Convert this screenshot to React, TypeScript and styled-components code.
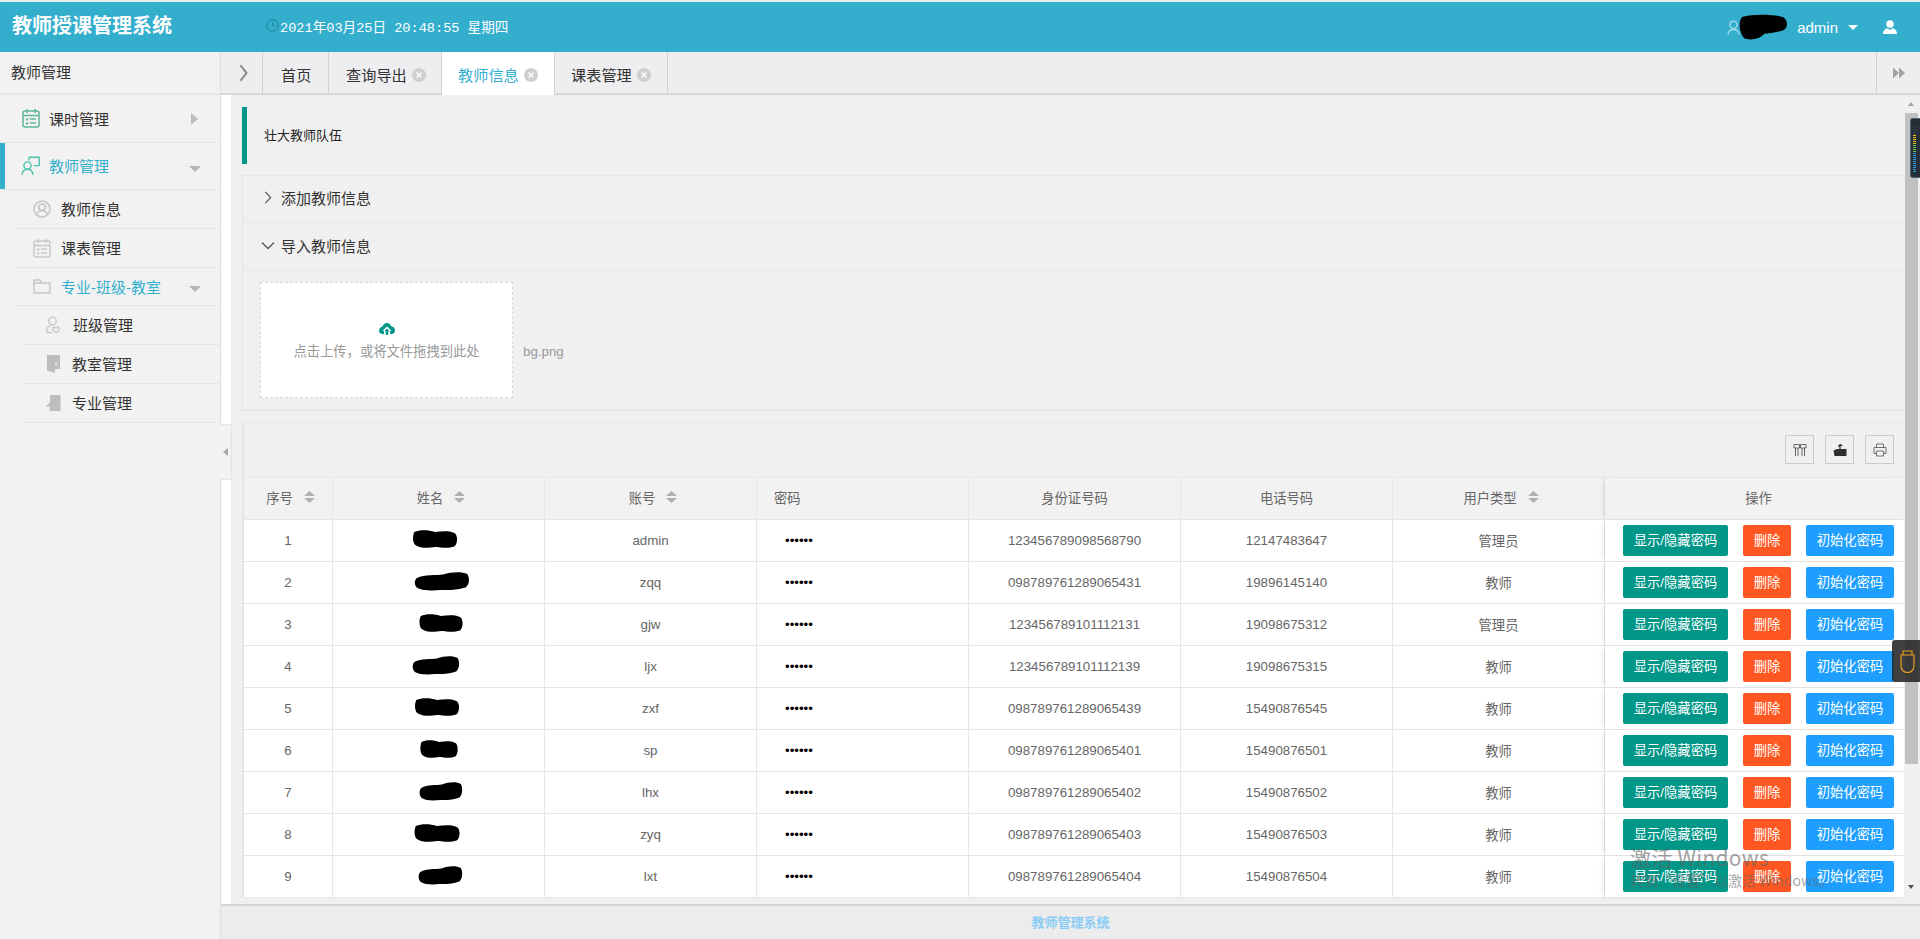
import React from "react";
import styled, { createGlobalStyle } from "styled-components";

const FONT = `"Liberation Sans", "Noto Sans CJK SC", sans-serif`;
const BLUE = "#33aecd";
const LINE = "#e6e6e6";

const Global = createGlobalStyle`
  html, body { margin: 0; padding: 0; height: 100%; overflow: hidden; background: #f2f2f2; }
  #root { height: 100%; }
  * { box-sizing: border-box; }
`;

const Page = styled.div`
  position: relative; width: 1920px; height: 939px; overflow: hidden;
  display: flex; flex-direction: column; font-family: ${FONT}; color: #333; border-top: 2px solid #e9eef0;
`;

/* ---------- header ---------- */
const Header = styled.header`
  flex: 0 0 50px; background: ${BLUE}; display: flex; align-items: center; color: #fff;
`;
const Logo = styled.h1`
  margin: 0; padding: 0 0 2px 12px; width: 266px; font-size: 20px; font-weight: 700; line-height: 48px;
`;
const Clock = styled.div`
  display: flex; align-items: center; font-family: "Liberation Mono", "Noto Sans CJK SC", monospace; font-size: 13.6px;
  gap: 1px; padding-bottom: 3px; svg { display: block; }
`;
const HeaderRight = styled.div`
  margin-left: auto; display: flex; align-items: center; padding-right: 23px; font-size: 15px;
`;
const AdminName = styled.span` margin-left: 10px; `;
const Caret = styled.span`
  margin: 1px 25px 0 10px; width: 0; height: 0;
  border-left: 5px solid transparent; border-right: 5px solid transparent; border-top: 5px solid #fff;
`;

/* ---------- body ---------- */
const Body = styled.div` flex: 1; display: flex; min-height: 0; `;

const Sidebar = styled.aside`
  position: relative; flex: 0 0 221px; background: #f2f2f2; border-right: 1px solid #dedede;
`;
const SideTitle = styled.div`
  height: 43px; line-height: 41px; padding-left: 11px; font-size: 15px; border-bottom: 2px solid ${LINE};
`;
const SideRow = styled.div<{ $active?: boolean; $h: number; $indent: number; $line: number; $blue?: boolean; $gap: number }>`
  position: relative; height: ${(p) => p.$h}px; display: flex; align-items: center;
  padding: 0 0 2px ${(p) => p.$indent}px; gap: ${(p) => p.$gap}px; font-size: 15px;
  color: ${(p) => (p.$blue ? BLUE : "#333")};
  &::after {
    content: ""; position: absolute; left: ${(p) => p.$line}px; right: 0; bottom: 0; height: 1px; background: ${LINE};
  }
  ${(p) => p.$active && `&::before { content: ""; position: absolute; left: 0; top: 0; bottom: 0; width: 5px; background: ${BLUE}; }`}
`;
const SideArrowRight = styled.span`
  position: absolute; left: 191px; top: 50%; margin-top: -6px; width: 0; height: 0;
  border-top: 6px solid transparent; border-bottom: 6px solid transparent; border-left: 7px solid #bdbdbd;
`;
const SideArrowDown = styled.span`
  position: absolute; left: 189px; top: 50%; margin-top: -1px; width: 0; height: 0;
  border-left: 6px solid transparent; border-right: 6px solid transparent; border-top: 6px solid #b5b5b5;
`;
const Handle = styled.div`
  position: absolute; left: 100%; top: 372px; width: 12px; height: 56px; background: #f2f2f2; z-index: 2;
  border: 1px solid #e4e4e4; border-left: 0; border-radius: 0 3px 3px 0; display: flex; align-items: center; justify-content: center;
  &::after {
    content: ""; width: 0; height: 0; border-top: 4px solid transparent; border-bottom: 4px solid transparent; border-right: 5px solid #a8a8a8;
  }
`;

const Right = styled.div` flex: 1; min-width: 0; display: flex; flex-direction: column; `;

/* ---------- tabs ---------- */
const TabBar = styled.nav`
  flex: 0 0 43px; display: flex; background: #eeeef0; border-bottom: 2px solid #d8d8d8;
`;
const TabSide = styled.div<{ $w: number; $end?: boolean }>`
  flex: 0 0 ${(p) => p.$w}px; display: flex; align-items: center; justify-content: center;
  ${(p) => (p.$end ? "margin-left: auto; border-left: 1px solid #d2d2d2;" : "border-right: 1px solid #d2d2d2; padding-left: 4px;")}
`;
const Tab = styled.div<{ $active?: boolean; $w: number; $pad: number }>`
  width: ${(p) => p.$w}px; height: 43px; margin-bottom: -2px; padding-left: ${(p) => p.$pad}px; display: flex; align-items: center; gap: 5px;
  font-size: 15.2px; border-right: 1px solid #d2d2d2;
  background: ${(p) => (p.$active ? "#fff" : "transparent")}; color: ${(p) => (p.$active ? BLUE : "#333")};
  svg { margin-top: 2px; }
`;

/* ---------- main ---------- */
const MainWrap = styled.div`
  flex: 1; min-height: 0; display: flex; padding-left: 10px; background: #fff; border-bottom: 2px solid #d5d5d5;
`;
const Content = styled.main`
  flex: 1; min-width: 0; overflow: hidden; background: #f0f0f0; padding: 12px 2px 0 11px;
`;
const Quote = styled.div`
  height: 57px; border-left: 5px solid #009688; padding: 0 0 2px 17px; display: flex; align-items: center;
  font-size: 13px; color: #222; margin-bottom: 11px;
`;
const Collapse = styled.section`
  border: 1px solid ${LINE}; border-right: 0; border-bottom: 2px solid #e6e6e6; margin-bottom: 11px;
`;
const CollapseTitle = styled.div<{ $bordered?: boolean }>`
  height: 47px; display: flex; align-items: center; padding: 0 0 3px 17px; gap: 6px; font-size: 15px; color: #333;
  ${(p) => p.$bordered && `border-bottom: 1px solid ${LINE};`}
`;
const ChevSlot = styled.span` width: 15px; display: flex; justify-content: center; `;
const CollapseBody = styled.div`
  height: 139px; padding: 0 17px; display: flex; align-items: center; gap: 10px; border-top: 1px solid ${LINE}; 
`;
const Drop = styled.div`
  width: 253px; height: 116px; background: #fff; border: 1px dashed #d9d9d9; display: flex; flex-direction: column;
  align-items: center; justify-content: center; gap: 6px; font-size: 13.3px; color: #999; padding-top: 3px;
`;
const FileName = styled.span` font-size: 13.3px; color: #999; margin-top: 22px; `;

const TableBox = styled.section` border: 1px solid ${LINE}; border-right: 0; border-bottom: 0; border-left-width: 2px; `;
const Toolbar = styled.div`
  height: 55px; display: flex; align-items: center; justify-content: flex-end; gap: 11px; padding: 0 9px 1px 0; border-bottom: 1px solid ${LINE};
`;
const ToolBtn = styled.div`
  width: 29px; height: 29px; border: 1px solid #ccc; display: flex; align-items: center; justify-content: center;
`;
const Table = styled.table`
  width: 1660px; border-collapse: separate; border-spacing: 0; table-layout: fixed; font-size: 13.3px; color: #666;
`;
const Th = styled.th<{ $left?: boolean; $fixed?: boolean; $sort?: boolean }>`
  height: 42px; padding: 0 0 3px; font-weight: 400; background: #f2f2f2; color: #666;
  border-right: ${(p) => (p.$fixed ? 0 : `1px solid ${LINE}`)}; border-bottom: 1px solid ${LINE};
  text-align: ${(p) => (p.$left ? "left" : "center")};
  padding-left: ${(p) => (p.$left ? "17px" : p.$fixed ? "8px" : p.$sort ? "5px" : "0")};
  ${(p) => p.$fixed && "box-shadow: -4px 0 6px -3px rgba(0,0,0,.12);"}
`;
const SortWrap = styled.span` display: inline-flex; align-items: center; gap: 11px; `;
const Td = styled.td<{ $pw?: boolean; $fixed?: boolean }>`
  height: 42px; padding: 0 0 1px; background: #fff; text-align: ${(p) => (p.$pw ? "left" : "center")};
  border-right: ${(p) => (p.$fixed ? 0 : `1px solid ${LINE}`)}; border-bottom: 1px solid ${LINE};
  ${(p) => p.$pw && "padding-left: 28px; color: #000;"}
  ${(p) => p.$fixed && "box-shadow: -4px 0 6px -3px rgba(0,0,0,.12);"}
`;
const Actions = styled.div` display: flex; align-items: center; gap: 15px; padding-left: 18px; `;
const Btn = styled.button<{ $tone: "teal" | "red" | "blue" }>`
  height: 31px; padding: 0; border: 0; border-radius: 2px; color: #fff; font: 13.3px/31px ${FONT};
  width: ${(p) => ({ teal: 105, red: 48, blue: 88 }[p.$tone])}px;
  background: ${(p) => ({ teal: "#009688", red: "#ff5722", blue: "#1e9fff" }[p.$tone])};
`;
const Blob = styled.svg<{ $dx: number; $w: number }>`
  display: block; width: ${(p) => p.$w}px; height: 20px; margin: -3px auto 0; transform: translateX(${(p) => p.$dx}px); filter: blur(.4px);
`;
const HeaderBlob = styled.svg` display: block; width: 50px; height: 26px; margin-left: -2px; margin-right: -1px; `;

/* ---------- fake scrollbar ---------- */
const Scroll = styled.div`
  flex: 0 0 15px; background: #f0f0f0; display: flex; flex-direction: column; align-items: flex-start;
`;
const ArrowUp = styled.span`
  margin: 7px 0 0 3px; width: 0; height: 0; border-left: 3.5px solid transparent; border-right: 3.5px solid transparent; border-bottom: 4px solid #a3a3a3;
`;
const Thumb = styled.div` margin-top: 7px; width: 13px; height: 651px; background: #c1c1c1; `;
const ArrowDown = styled.span`
  margin: auto 0 15px 3px; width: 0; height: 0; border-left: 3.5px solid transparent; border-right: 3.5px solid transparent; border-top: 4px solid #505050;
`;

const Footer = styled.footer`
  flex: 0 0 33px; background: #ececec; text-align: center; line-height: 33px; font-size: 13px; font-weight: 700; color: #8accf5;
`;

/* ---------- overlays ---------- */
const Meter = styled.svg` position: absolute; left: 1910px; top: 116px; width: 10px; height: 60px; display: block; `;
const UsbDock = styled.div`
  position: absolute; left: 1892px; top: 638px; width: 28px; height: 42px; background: rgba(38,38,38,.88); border-radius: 3px 0 0 3px;
  display: flex; align-items: center; justify-content: center; padding-left: 2px;
`;
const Watermark = styled.div`
  position: absolute; left: 1630px; top: 842px; color: rgba(100,100,100,.6); pointer-events: none; font-family: "Noto Sans CJK SC", "Liberation Sans", sans-serif;
`;
const WaterBig = styled.div` font-size: 21px; line-height: 27px; letter-spacing: .3px; `;
const WaterSmall = styled.div` font-size: 14px; line-height: 20px; margin-top: -1px; `;

/* ---------- icons ---------- */
const CalIcon = ({ c, sw = 1.5 }: { c: string; sw?: number }) => (
  <svg width="18" height="20" viewBox="0 0 18 20" fill="none" stroke={c} strokeWidth={sw}>
    <rect x="1" y="3" width="16" height="16" rx="2" />
    <path d="M1 7.5h16M5 1v4M13 1v4M8 11h6M8 15h6M4 11l1 1 1.3-1.6M4 15l1 1 1.3-1.6" />
  </svg>
);
const ChatUser = () => (
  <svg width="20" height="20" viewBox="0 0 20 20" fill="none" stroke="#4cc0a8" strokeWidth="1.4">
    <path d="M8 1.2h10.2v8.4H13M8 1.2v3.4" />
    <circle cx="6.5" cy="9.5" r="3.6" />
    <path d="M1 18.8c.4-3.6 2.6-5.6 5.5-5.6s5.1 2 5.5 5.6" />
  </svg>
);
const UserCircle = () => (
  <svg width="18" height="18" viewBox="0 0 18 18" fill="none" stroke="#c6c6c6" strokeWidth="1.6">
    <circle cx="9" cy="9" r="8" />
    <circle cx="9" cy="7.2" r="3.2" />
    <path d="M3.6 14.8c.8-2.6 2.8-4 5.4-4s4.6 1.4 5.4 4" />
  </svg>
);
const Folder = () => (
  <svg width="18" height="15" viewBox="0 0 18 15" fill="none" stroke="#c6c6c6" strokeWidth="1.4">
    <path d="M1 1h6l2 3h8v10H1zM1 4h8" />
  </svg>
);
const UserHeart = () => (
  <svg width="16" height="18" viewBox="0 0 16 18" fill="none" stroke="#c6c6c6" strokeWidth="1.3">
    <circle cx="6.5" cy="5" r="3.8" />
    <path d="M5 9.5c-3 1-4.5 2.6-4.5 4.6 0 1.6 1.4 2.6 3.6 2.6h2M9.5 11.6c-.9-1-2.8-.4-2.8 1.1 0 1.5 1.6 2.8 3.4 4 1.8-1.2 3.4-2.5 3.4-4 0-1.5-1.9-2.1-2.8-1.1l-.6.7z" />
  </svg>
);
const Door = () => (
  <svg width="15" height="19" viewBox="0 0 15 19">
    <path d="M1 1h13v14l-5 .2V19L1 16.6z" fill="#bdbdbd" />
    <path d="M10 8v3" stroke="#f2f2f2" strokeWidth="1.4" />
  </svg>
);
const Book = () => (
  <svg width="16" height="16" viewBox="0 0 16 16">
    <path d="M5 0h10.5v16H4.6V11.6H.6L5 7z" fill="#bdbdbd" />
  </svg>
);
const Close = () => (
  <svg width="14" height="14" viewBox="0 0 14 14">
    <circle cx="7" cy="7" r="7" fill="#cfcfcf" />
    <path d="M4.5 4.5l5 5M9.5 4.5l-5 5" stroke="#fff" strokeWidth="1.4" />
  </svg>
);
const ChevR = ({ c = "#555", w = 9, h = 14, sw = 1.3 }: { c?: string; w?: number; h?: number; sw?: number }) => (
  <svg width={w} height={h} viewBox="0 0 9 14" fill="none" stroke={c} strokeWidth={sw} preserveAspectRatio="none">
    <path d="M1.5 1l6 6-6 6" />
  </svg>
);
const ChevD = () => (
  <svg width="14" height="9" viewBox="0 0 14 9" fill="none" stroke="#555" strokeWidth="1.3">
    <path d="M1 1.5l6 6 6-6" />
  </svg>
);
const Sort = () => (
  <svg width="11" height="12" viewBox="0 0 11 12" fill="#b0b0b0">
    <path d="M5.5 0L11 5H0zM0 7h11l-5.500 5z" />
  </svg>
);
const Cloud = () => (
  <svg width="16" height="12" viewBox="0 0 16 12" fill="#009688">
    <path d="M8 0c2.200 0 3.800 1.400 4.200 3.300C14.400 3.600 16 5.200 16 7.500 16 9.700 14.500 11 12.600 11H11V7.800h1.600L8 3.500 3.400 7.800H5V11H3.400C1.500 11 0 9.700 0 7.500 0 5.400 1.500 3.800 3.700 3.400 4.200 1.400 5.800 0 8 0z" />
    <path d="M8 5.500l2.600 2.700H9.200V12H6.800V8.200H5.400z" />
  </svg>
);

const names: [number, number, number][] = [
  [-4, 46, 0], [3, 56, 1], [2.5, 45, 0], [-3, 48, 1], [-2, 46, 0], [0.5, 39, 0], [2, 44, 1], [-1.5, 47, 0], [2, 45, 1],
];
const blobPaths = [
  "M5 6C18 1 36 2 50 6 66 4 84 3 94 9 100 16 99 30 92 35 76 40 62 36 50 36 34 39 16 38 7 32 1 26 1 14 5 6Z",
  "M5 14C20 6 38 9 52 7 68 1 86 1 95 6 100 14 99 28 92 33 76 39 60 38 48 38 32 40 14 39 6 34 0 28 0 20 5 14Z",
];
const rows = [
  ["1", "admin", "123456789098568790", "12147483647", "管理员"],
  ["2", "zqq", "098789761289065431", "19896145140", "教师"],
  ["3", "gjw", "123456789101112131", "19098675312", "管理员"],
  ["4", "ljx", "123456789101112139", "19098675315", "教师"],
  ["5", "zxf", "098789761289065439", "15490876545", "教师"],
  ["6", "sp", "098789761289065401", "15490876501", "教师"],
  ["7", "lhx", "098789761289065402", "15490876502", "教师"],
  ["8", "zyq", "098789761289065403", "15490876503", "教师"],
  ["9", "lxt", "098789761289065404", "15490876504", "教师"],
];
const colWidths = [89, 212, 212, 212, 212, 212, 212, 299];

export default function App() {
  return (
    <Page>
      <Global />
      <Header>
        <Logo>教师授课管理系统</Logo>
        <Clock>
          <svg width="13" height="13" viewBox="0 0 13 13" fill="none" stroke="#1f7f9b" strokeWidth="1">
            <circle cx="6.500" cy="6.500" r="5.800" />
            <path d="M6.500 3v3.800h2.800" />
          </svg>
          2021年03月25日 20:48:55 星期四
        </Clock>
        <HeaderRight>
          <svg width="13" height="15" viewBox="0 0 13 15" fill="none" stroke="#a5dce8" strokeWidth="1.300">
            <circle cx="6.500" cy="4.800" r="3.600" />
            <path d="M1 14.500c.3-3.400 2.500-5 5.500-5s5.200 1.600 5.500 5" />
          </svg>
          <HeaderBlob viewBox="0 0 50 26">
            <path d="M4 3C14 0 34 0 45 3 50 6 50 13 46 16 38 19 30 19 26 20 22 25 12 27 6 24 1 18 0 8 4 3Z" fill="#000" />
          </HeaderBlob>
          <AdminName>admin</AdminName>
          <Caret />
          <svg width="14" height="14" viewBox="0 0 14 14" fill="#fff">
            <circle cx="7" cy="4" r="3.800" />
            <path d="M0 14c0-3.600 2.200-5.400 4.500-5.800L7 10l2.500-1.800C11.800 8.600 14 10.400 14 14z" />
          </svg>
        </HeaderRight>
      </Header>

      <Body>
        <Sidebar>
          <SideTitle>教师管理</SideTitle>
          <SideRow $h={48} $indent={22} $line={0} $gap={9}>
            <CalIcon c="#5db59b" />
            课时管理
            <SideArrowRight />
          </SideRow>
          <SideRow $h={47} $indent={21} $line={0} $gap={8} $active $blue>
            <ChatUser />
            教师管理
            <SideArrowDown />
          </SideRow>
          <SideRow $h={39} $indent={33} $line={13} $gap={10}><UserCircle />教师信息</SideRow>
          <SideRow $h={39} $indent={33} $line={13} $gap={10}><CalIcon c="#c9c9c9" />课表管理</SideRow>
          <SideRow $h={38} $indent={33} $line={13} $gap={10} $blue>
            <Folder />专业-班级-教室<SideArrowDown />
          </SideRow>
          <SideRow $h={39} $indent={46} $line={24} $gap={11}><UserHeart />班级管理</SideRow>
          <SideRow $h={39} $indent={46} $line={24} $gap={11}><Door />教室管理</SideRow>
          <SideRow $h={39} $indent={45} $line={24} $gap={11}><Book />专业管理</SideRow>
          <Handle />
        </Sidebar>

        <Right>
          <TabBar>
            <TabSide $w={42}><ChevR c="#888" w={9} h={18} sw={1.8} /></TabSide>
            <Tab $w={66} $pad={18}>首页</Tab>
            <Tab $w={113} $pad={17}>查询导出<Close /></Tab>
            <Tab $w={113} $pad={16} $active>教师信息<Close /></Tab>
            <Tab $w={113} $pad={16}>课表管理<Close /></Tab>
            <TabSide $w={44} $end>
              <svg width="12" height="12" viewBox="0 0 12 11" fill="#a3a3a3">
                <path d="M0 0l6 5.500L0 11zM6 0l6 5.500L6 11z" />
              </svg>
            </TabSide>
          </TabBar>

          <MainWrap>
            <Content>
              <Quote>壮大教师队伍</Quote>
              <Collapse>
                <CollapseTitle $bordered><ChevSlot><ChevR w={8} h={13} /></ChevSlot>添加教师信息</CollapseTitle>
                <CollapseTitle><ChevSlot><ChevD /></ChevSlot>导入教师信息</CollapseTitle>
                <CollapseBody>
                  <Drop>
                    <Cloud />
                    点击上传，或将文件拖拽到此处
                  </Drop>
                  <FileName>bg.png</FileName>
                </CollapseBody>
              </Collapse>
              <TableBox>
                <Toolbar>
                  <ToolBtn>
                    <svg width="14" height="14" viewBox="0 0 14 14" fill="none" stroke="#666" strokeWidth="1">
                      <path d="M1 1.500h5.500v3.500H1zM7.500 1.500H13v3.500H7.500zM2.500 5v8M5 5v8M9 5v8M11.500 5v8" />
                    </svg>
                  </ToolBtn>
                  <ToolBtn>
                    <svg width="14" height="14" viewBox="0 0 14 14" fill="#2e2e2e">
                      <path d="M0.500 7.500l3.500-1.500h9.500v7H1.500z" />
                      <path d="M7 6V2.500M5.400 3.500L7.200 1.500 9.400 3" fill="none" stroke="#2e2e2e" strokeWidth="1.200" />
                    </svg>
                  </ToolBtn>
                  <ToolBtn>
                    <svg width="14" height="14" viewBox="0 0 14 14" fill="none" stroke="#6e6e6e" strokeWidth="1">
                      <path d="M3.500 4.500V1h7v3.500M3.500 10.500H1V4.500h12v6h-2.500" />
                      <path d="M3.500 8h7v5h-7z" />
                    </svg>
                  </ToolBtn>
                </Toolbar>
                <Table>
                  <colgroup>
                    {colWidths.map((w, i) => (
                      <col key={i} width={w} />
                    ))}
                  </colgroup>
                  <thead>
                    <tr>
                      <Th $sort><SortWrap>序号<Sort /></SortWrap></Th>
                      <Th $sort><SortWrap>姓名<Sort /></SortWrap></Th>
                      <Th $sort><SortWrap>账号<Sort /></SortWrap></Th>
                      <Th $left>密码</Th>
                      <Th>身份证号码</Th>
                      <Th>电话号码</Th>
                      <Th $sort><SortWrap>用户类型<Sort /></SortWrap></Th>
                      <Th $fixed>操作</Th>
                    </tr>
                  </thead>
                  <tbody>
                    {rows.map((r, i) => (
                      <tr key={r[0]}>
                        <Td>{r[0]}</Td>
                        <Td>
                          <Blob $dx={names[i][0]} $w={names[i][1]} viewBox="0 0 100 40" preserveAspectRatio="none">
                            <path d={blobPaths[names[i][2]]} fill="#000" />
                          </Blob>
                        </Td>
                        <Td>{r[1]}</Td>
                        <Td $pw>••••••</Td>
                        <Td>{r[2]}</Td>
                        <Td>{r[3]}</Td>
                        <Td>{r[4]}</Td>
                        <Td $fixed>
                          <Actions>
                            <Btn $tone="teal">显示/隐藏密码</Btn>
                            <Btn $tone="red">删除</Btn>
                            <Btn $tone="blue">初始化密码</Btn>
                          </Actions>
                        </Td>
                      </tr>
                    ))}
                  </tbody>
                </Table>
              </TableBox>
            </Content>
            <Scroll>
              <ArrowUp />
              <Thumb />
              <ArrowDown />
            </Scroll>
          </MainWrap>
          <Footer>教师管理系统</Footer>
        </Right>
      </Body>

      <Meter viewBox="0 0 10 60">
        <rect x=".5" y=".5" width="12" height="59" rx="2" fill="#262e38" stroke="#56626e" />
        {Array.from({ length: 23 }).map((_, i) => (
          <rect
            key={i}
            x="3"
            y={9 + i * 2}
            width="3"
            height="1"
            fill={i < 4 ? "#3a4048" : i < 9 ? "#e6c81e" : i < 13 ? "#6cc04a" : "#2a9fe0"}
          />
        ))}
      </Meter>
      <UsbDock>
        <svg width="15" height="23" viewBox="0 0 15 23" fill="none" stroke="#e8a020" strokeWidth="1.200">
          <path d="M3 5V1h9v4M1 5h13v11c0 4-3 6.500-6.500 6.500S1 20 1 16z" />
          <path d="M5.500 3h.1M9.500 3h.1" />
        </svg>
      </UsbDock>
      <Watermark>
        <WaterBig>激活 Windows</WaterBig>
        <WaterSmall>转到“设置”以激活 Windows。</WaterSmall>
      </Watermark>
    </Page>
  );
}
